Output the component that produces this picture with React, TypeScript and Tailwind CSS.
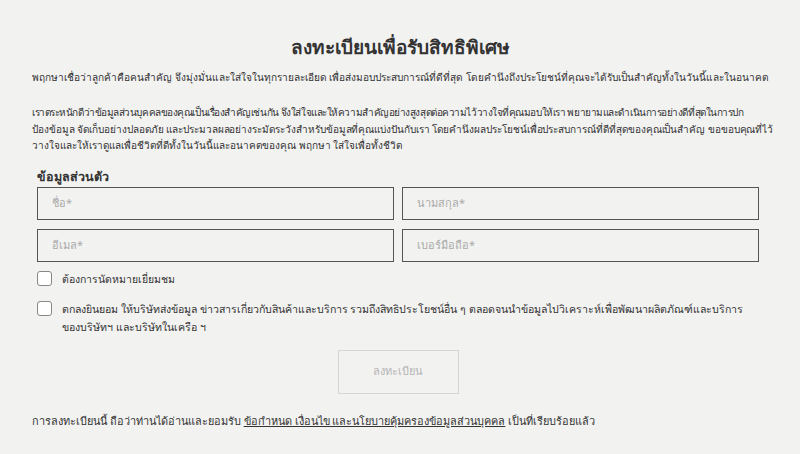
import React from "react";

export default function App() {
  return (
    <div
      className="w-[800px] h-[454px] bg-[#f2f2f1] text-[#333333] overflow-hidden"
      style={{ fontFamily: '"Noto Sans", "Liberation Sans", sans-serif' }}
    >
      <div className="px-[32px] pt-[34px]">
        <h1 className="text-center text-[19px] font-bold leading-[26px] text-[#333]">
          ลงทะเบียนเพื่อรับสิทธิพิเศษ
        </h1>
        <p className="mt-[9px] text-[10.1px] leading-[16px] whitespace-nowrap">
          พฤกษาเชื่อว่าลูกค้าคือคนสำคัญ จึงมุ่งมั่นและใส่ใจในทุกรายละเอียด เพื่อส่งมอบประสบการณ์ที่ดีที่สุด โดยคำนึงถึงประโยชน์ที่คุณจะได้รับเป็นสำคัญทั้งในวันนี้และในอนาคต
        </p>
        <p className="mt-[19px] text-[10px] leading-[16.5px] whitespace-nowrap">
          <span className="tracking-[-0.45px]">
            เราตระหนักดีว่าข้อมูลส่วนบุคคลของคุณเป็นเรื่องสำคัญเช่นกัน จึงใส่ใจและให้ความสำคัญอย่างสูงสุดต่อความไว้วางใจที่คุณมอบให้เรา พยายามและดำเนินการอย่างดีที่สุดในการปก
          </span>
          <br />
          <span className="tracking-[-0.05px]">
            ป้องข้อมูล จัดเก็บอย่างปลอดภัย และประมวลผลอย่างระมัดระวังสำหรับข้อมูลที่คุณแบ่งปันกับเรา โดยคำนึงผลประโยชน์เพื่อประสบการณ์ที่ดีที่สุดของคุณเป็นสำคัญ ขอขอบคุณที่ไว้
          </span>
          <br />
          วางใจและให้เราดูแลเพื่อชีวิตที่ดีทั้งในวันนี้และอนาคตของคุณ พฤกษา ใส่ใจเพื่อทั้งชีวิต
        </p>
        <div className="pl-[5px] pr-[9px]">
          <h2 className="mt-[14px] text-[12.5px] font-bold leading-[18px]">ข้อมูลส่วนตัว</h2>
          <div className="mt-[1px] grid grid-cols-2 gap-x-[8px] gap-y-[9px]">
            {["ชื่อ*", "นามสกุล*", "อีเมล*", "เบอร์มือถือ*"].map((p) => (
              <div
                key={p}
                className="h-[33px] border border-[#555] flex items-center px-[14px] text-[11px] text-[#aaaaaa]"
              >
                {p}
              </div>
            ))}
          </div>
          <div className="mt-[9px] flex items-center gap-[10px]">
            <span className="w-[15px] h-[15px] border border-[#888] rounded-[3px] bg-white shrink-0" />
            <span className="text-[10.5px] leading-[16px]">ต้องการนัดหมายเยี่ยมชม</span>
          </div>
          <div className="mt-[13px] flex items-start gap-[10px]">
            <span className="mt-[1px] w-[15px] h-[15px] border border-[#888] rounded-[3px] bg-white shrink-0" />
            <span className="text-[10.6px] leading-[18px] whitespace-nowrap">
              ตกลงยินยอม ให้บริษัทส่งข้อมูล ข่าวสารเกี่ยวกับสินค้าและบริการ รวมถึงสิทธิประโยชน์อื่น ๆ ตลอดจนนำข้อมูลไปวิเคราะห์เพื่อพัฒนาผลิตภัณฑ์และบริการ
              <br />
              ของบริษัทฯ และบริษัทในเครือ ฯ
            </span>
          </div>
          <div className="mt-[14px] flex justify-center">
            <button className="w-[121px] h-[44px] border border-[#d6d6d6] text-[11px] text-[#b5b5b5] bg-transparent">
              ลงทะเบียน
            </button>
          </div>
        </div>
        <p className="mt-[19px] text-[10.9px] leading-[16px] whitespace-nowrap">
          การลงทะเบียนนี้ ถือว่าท่านได้อ่านและยอมรับ{" "}
          <span className="underline">ข้อกำหนด เงื่อนไข และนโยบายคุ้มครองข้อมูลส่วนบุคคล</span>{" "}
          เป็นที่เรียบร้อยแล้ว
        </p>
      </div>
    </div>
  );
}
